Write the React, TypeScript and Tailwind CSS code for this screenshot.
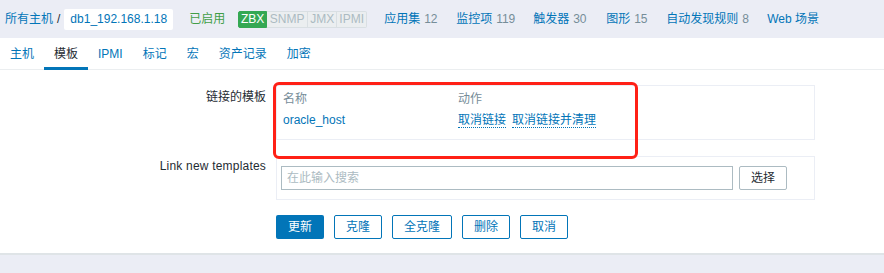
import React from "react";

const font = { fontFamily: '"Liberation Sans", Arial, "Noto Sans CJK SC", sans-serif' };

function NavItem({ label, count }: { label: string; count?: string }) {
  return (
    <span className="whitespace-nowrap">
      <span className="text-[#0275b8]">{label}</span>
      {count && <span className="text-[#768d99] ml-[4px]">{count}</span>}
    </span>
  );
}

export default function App() {
  const tabs = ["主机", "模板", "IPMI", "标记", "宏", "资产记录", "加密"];
  return (
    <div style={font} className="w-[884px] h-[273px] bg-[#ebedf5] text-[12px] text-[#1f2c33] overflow-hidden">
      {/* top bar */}
      <div className="h-[38px] flex items-center pl-[5px]">
        <span className="text-[#0275b8]">所有主机</span>
        <span className="text-[#1f2c33] ml-[4px]">/</span>
        <span className="ml-[4px] h-[21px] px-[6px] bg-white flex items-center text-[#0275b8] rounded-[2px]">db1_192.168.1.18</span>
        <span className="ml-[16px] text-[#429e47]">已启用</span>
        <span className="ml-[13px] flex items-center h-[17px]">
          <span className="w-[29px] h-[17px] flex items-center justify-center bg-[#34a853] text-white border border-[#34a853] rounded-l-[2px]">ZBX</span>
          <span className="w-[41px] h-[17px] flex items-center justify-center bg-[#ebeef0] text-[#acbbc2] border border-[#d9dfe3] border-l-0">SNMP</span>
          <span className="w-[29px] h-[17px] flex items-center justify-center bg-[#ebeef0] text-[#acbbc2] border border-[#d9dfe3] border-l-0">JMX</span>
          <span className="w-[30px] h-[17px] flex items-center justify-center bg-[#ebeef0] text-[#acbbc2] border border-[#d9dfe3] border-l-0 rounded-r-[2px]">IPMI</span>
        </span>
        <span className="ml-[17px] flex items-center">
          <span className="w-[72px]"><NavItem label="应用集" count="12" /></span>
          <span className="w-[77px]"><NavItem label="监控项" count="119" /></span>
          <span className="w-[73px]"><NavItem label="触发器" count="30" /></span>
          <span className="w-[60px]"><NavItem label="图形" count="15" /></span>
          <span className="w-[101px]"><NavItem label="自动发现规则" count="8" /></span>
          <NavItem label="Web 场景" />
        </span>
      </div>

      {/* white panel */}
      <div className="bg-white border-b-2 border-[#dfe4e7] h-[217px] relative">
        {/* tabs */}
        <div className="h-[32px] flex border-b border-[#ebeef0]">
          {tabs.map((t, i) => (
            <div
              key={t}
              className={
                "h-[31px] px-[10px] flex items-center relative " +
                (i === 1 ? "text-[#1f2c33]" : "text-[#0275b8]")
              }
            >
              {t}
              {i === 1 && <span className="absolute left-0 right-0 bottom-[-1px] h-[3px] bg-[#0275b8]" />}
            </div>
          ))}
        </div>

        {/* form */}
        <div className="grid grid-cols-[266px_539px] gap-x-[10px] pt-[15px]">
          <div className="text-right pt-[5px] leading-[14px]">链接的模板</div>
          <div className="border border-[#ebeef5] h-[55px] px-[6px] pt-[3px]">
            <div className="flex h-[20px] items-center text-[#768d99]">
              <span className="w-[175px]">名称</span>
              <span>动作</span>
            </div>
            <div className="flex h-[22px] items-center">
              <span className="w-[175px] text-[#0275b8]">oracle_host</span>
              <span className="text-[#0275b8] border-b border-dotted border-[#0275b8] leading-[14px]">取消链接</span>
              <span className="ml-[6px] text-[#0275b8] border-b border-dotted border-[#0275b8] leading-[14px]">取消链接并清理</span>
            </div>
          </div>

          <div className="text-right mt-[16px] leading-[14px] pt-[3px] tracking-[0.2px]">Link new templates</div>
          <div className="mt-[16px] border border-[#ebeef5] h-[44px] px-[4px] pt-[9px] flex items-start gap-[6px]">
            <div className="w-[452px] h-[24px] border border-[#acbbc2] flex items-center px-[5px] text-[#acbbc2]">在此输入搜索</div>
            <div className="w-[48px] h-[24px] border border-[#acbbc2] rounded-[2px] flex items-center justify-center text-[#1f2c33]">选择</div>
          </div>

          <div />
          <div className="mt-[15px] flex gap-[10px]">
            <div className="w-[48px] h-[24px] bg-[#0275b8] text-white rounded-[2px] flex items-center justify-center">更新</div>
            <div className="w-[48px] h-[24px] border border-[#0275b8] text-[#0275b8] rounded-[2px] flex items-center justify-center">克隆</div>
            <div className="w-[60px] h-[24px] border border-[#0275b8] text-[#0275b8] rounded-[2px] flex items-center justify-center">全克隆</div>
            <div className="w-[48px] h-[24px] border border-[#0275b8] text-[#0275b8] rounded-[2px] flex items-center justify-center">删除</div>
            <div className="w-[48px] h-[24px] border border-[#0275b8] text-[#0275b8] rounded-[2px] flex items-center justify-center">取消</div>
          </div>
        </div>

        {/* red annotation */}
        <div className="absolute left-[273px] top-[44px] w-[365px] h-[77px] border-[3px] border-[#ff2016] rounded-[6px] pointer-events-none" />
      </div>
    </div>
  );
}
